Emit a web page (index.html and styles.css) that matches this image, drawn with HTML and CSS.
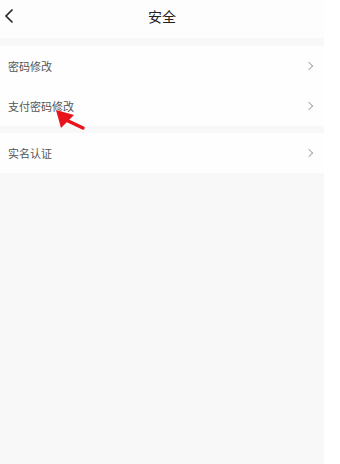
FILE: index.html
```html
<!DOCTYPE html>
<html lang="zh">
<head>
<meta charset="utf-8">
<link rel="stylesheet" href="styles.css">
</head>
<body>
<div class="page">
  <header class="topbar">
    <span class="back">
      <svg width="12" height="16" viewBox="0 0 12 16"><path d="M9.5 1.5 L3 8 L9.5 14.5" fill="none" stroke="#222" stroke-width="1.6"/></svg>
    </span>
    <h1 class="title">安全</h1>
  </header>
  <div class="group">
    <div class="row"><span class="label">密码修改</span><span class="chev"></span></div>
    <div class="row"><span class="label">支付密码修改</span><span class="chev"></span></div>
  </div>
  <div class="group">
    <div class="row"><span class="label">实名认证</span><span class="chev"></span></div>
  </div>
  <svg class="arrow" width="40" height="30" viewBox="0 0 40 30">
    <polygon points="6,10 24,15 11,28" fill="#e8141c"/>
    <line x1="16" y1="20" x2="33" y2="28" stroke="#e8141c" stroke-width="3.4" stroke-linecap="round"/>
  </svg>
</div>
</body>
</html>
```
FILE: styles.css
```css
html, body { margin: 0; padding: 0; background: #fff; }
body { font-family: "Noto Sans CJK SC", "Noto Sans", sans-serif; }
.page {
  position: relative;
  width: 324px;
  height: 464px;
  background: #f8f8f8;
}
.topbar {
  height: 38px;
  background: #fdfdfd;
  display: flex;
  align-items: flex-start;
  justify-content: center;
  position: relative;
}
.back { position: absolute; left: 3px; top: 8px; display: flex; }
.title { margin: 0; padding-top: 6px; font-size: 14px; line-height: 20px; font-weight: normal; color: #222; }
.group { margin-top: 8px; background: #fefefe; }
.group + .group { margin-top: 7px; }
.row {
  height: 40px;
  display: flex;
  align-items: center;
  justify-content: space-between;
  padding: 0 10px 0 8px;
}
.label { font-size: 11px; color: #555; }
.chev {
  width: 5px; height: 5px;
  border-top: 1px solid #aaa;
  border-right: 1px solid #aaa;
  transform: rotate(45deg);
  margin-right: 2px;
}
.arrow { position: absolute; left: 50px; top: 100px; }
```
